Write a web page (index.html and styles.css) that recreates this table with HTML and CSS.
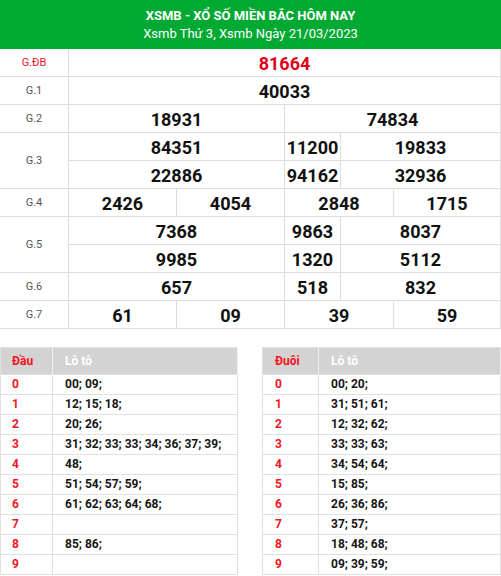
FILE: index.html
```html
<!DOCTYPE html>
<html lang="vi">
<head>
<meta charset="utf-8">
<title>XSMB</title>
<link rel="stylesheet" href="styles.css">
</head>
<body>
<div class="head">
  <div class="title">XSMB - XỔ SỐ MIỀN BẮC HÔM NAY</div>
  <div class="sub">Xsmb Thứ 3, Xsmb Ngày 21/03/2023</div>
</div>
<div class="kq">
  <div class="lbl red">G.ĐB</div>
  <div class="num red s5">81664</div>

  <div class="lbl">G.1</div>
  <div class="num s5">40033</div>

  <div class="lbl">G.2</div>
  <div class="num s2">18931</div>
  <div class="num s3">74834</div>

  <div class="lbl r2">G.3</div>
  <div class="num s2">84351</div>
  <div class="num">11200</div>
  <div class="num s2">19833</div>
  <div class="num s2">22886</div>
  <div class="num">94162</div>
  <div class="num s2">32936</div>

  <div class="lbl">G.4</div>
  <div class="num">2426</div>
  <div class="num">4054</div>
  <div class="num s2">2848</div>
  <div class="num">1715</div>

  <div class="lbl r2">G.5</div>
  <div class="num s2">7368</div>
  <div class="num">9863</div>
  <div class="num s2">8037</div>
  <div class="num s2">9985</div>
  <div class="num">1320</div>
  <div class="num s2">5112</div>

  <div class="lbl">G.6</div>
  <div class="num s2">657</div>
  <div class="num">518</div>
  <div class="num s2">832</div>

  <div class="lbl">G.7</div>
  <div class="num">61</div>
  <div class="num">09</div>
  <div class="num s2">39</div>
  <div class="num">59</div>
</div>

<div class="loto">
  <table class="lt lt-dau">
    <thead><tr><th class="k">Đầu</th><th>Lô tô</th></tr></thead>
    <tbody>
      <tr><td class="k">0</td><td>00; 09;</td></tr>
      <tr><td class="k">1</td><td>12; 15; 18;</td></tr>
      <tr><td class="k">2</td><td>20; 26;</td></tr>
      <tr><td class="k">3</td><td>31; 32; 33; 33; 34; 36; 37; 39;</td></tr>
      <tr><td class="k">4</td><td>48;</td></tr>
      <tr><td class="k">5</td><td>51; 54; 57; 59;</td></tr>
      <tr><td class="k">6</td><td>61; 62; 63; 64; 68;</td></tr>
      <tr><td class="k">7</td><td></td></tr>
      <tr><td class="k">8</td><td>85; 86;</td></tr>
      <tr><td class="k">9</td><td></td></tr>
    </tbody>
  </table>
  <table class="lt lt-duoi">
    <thead><tr><th class="k">Đuôi</th><th>Lô tô</th></tr></thead>
    <tbody>
      <tr><td class="k">0</td><td>00; 20;</td></tr>
      <tr><td class="k">1</td><td>31; 51; 61;</td></tr>
      <tr><td class="k">2</td><td>12; 32; 62;</td></tr>
      <tr><td class="k">3</td><td>33; 33; 63;</td></tr>
      <tr><td class="k">4</td><td>34; 54; 64;</td></tr>
      <tr><td class="k">5</td><td>15; 85;</td></tr>
      <tr><td class="k">6</td><td>26; 36; 86;</td></tr>
      <tr><td class="k">7</td><td>37; 57;</td></tr>
      <tr><td class="k">8</td><td>18; 48; 68;</td></tr>
      <tr><td class="k">9</td><td>09; 39; 59;</td></tr>
    </tbody>
  </table>
</div>
</body>
</html>
```

FILE: styles.css
```css
* { box-sizing: border-box; }
html, body { margin: 0; padding: 0; background: #fff; }
body { font-family: Roboto, "Liberation Sans", Arial, sans-serif; color: #111; width: 501px; }

.head {
  background: #00a932;
  color: #fff;
  height: 49px;
  display: flex;
  flex-direction: column;
  align-items: center;
  justify-content: center;
  gap: 2px;
}
.title { font-weight: 700; font-size: 13px; line-height: 16px; }
.sub { font-size: 13px; line-height: 16px; }

.kq {
  display: grid;
  grid-template-columns: 69px 108px 108px 56px 53px 107px;
  grid-auto-rows: 28px;
}
.kq > div {
  border-bottom: 1px solid #dedede;
  border-right: 1px solid #dedede;
  display: flex;
  align-items: center;
  justify-content: center;
}
.lbl { font-size: 11px; color: #555; grid-column: 1; }
.lbl.r2 { grid-row: span 2; }
.num { font-weight: 700; font-size: 18px; color: #111; padding-top: 1px; }
.red { color: #e0001b; }
.lbl.red { color: #e8112d; }
.s2 { grid-column: span 2; }
.s3 { grid-column: span 3; }
.s5 { grid-column: span 5; }

.loto {
  display: flex;
  justify-content: space-between;
  margin-top: 18px;
}
.lt {
  width: 238px;
  border-collapse: collapse;
  font-size: 12px;
  border: 1px solid #e0e0e0;
}
.lt-duoi { width: 239px; }
.lt th {
  background: #d3d3d3;
  color: #fff;
  font-weight: 700;
  text-align: left;
  height: 27px;
  line-height: 26px;
  padding: 0 12px;
  border-right: 1px solid #eee;
}
.lt td {
  height: 20px;
  line-height: 19px;
  padding: 0 12px;
  font-weight: 700;
  color: #151515;
  border-top: 1px solid #e0e0e0;
  border-right: 1px solid #e0e0e0;
  white-space: nowrap;
}
.lt .k { color: #f5141e; }
.lt-dau .k { width: 52px; padding-left: 11px; }
.lt-duoi .k { width: 56px; }
```
